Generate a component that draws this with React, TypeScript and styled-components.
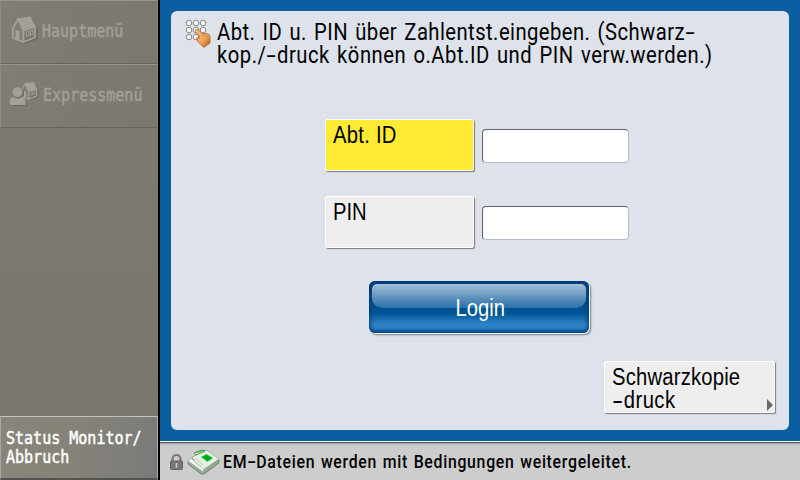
import React from "react";
import styled, { createGlobalStyle } from "styled-components";

const Global = createGlobalStyle`
  * { box-sizing: border-box; }
  body { margin: 0; overflow: hidden; font-family: Roboto, "Liberation Sans", sans-serif; }
`;

const Screen = styled.div`
  display: grid;
  grid-template-columns: 160px 640px;
  width: 800px;
  height: 480px;
  background: #0b5fa1;
`;

const Sidebar = styled.aside`
  display: flex;
  flex-direction: column;
  height: 480px;
  border-right: 2px solid #000;
  background: linear-gradient(#7f7a72, #7a756d);
`;

const MenuButton = styled.button<{ $inset: number; $gap: number }>`
  display: flex;
  align-items: center;
  gap: ${(p) => p.$gap}px;
  height: 64px;
  padding: 0 0 4px ${(p) => p.$inset}px;
  border: 1px solid;
  border-color: #99958e #8b877f #67635d #8f8b84;
  background: linear-gradient(100deg, #817d74, #7c7870);
  color: #a3a09a;
  svg { display: block; flex: none; }
`;

const StatusButton = styled.button`
  display: flex;
  flex-direction: column;
  height: 64px;
  margin-top: auto;
  padding: 11px 0 0 5px;
  border: solid;
  border-width: 1px 1px 2px 1px;
  border-color: #c5c3be #aaa8a3 #55534f #aaa8a3;
  background: linear-gradient(100deg, #89857a, #858279 50%, #7a7a79);
  color: #fff;
  text-align: left;
`;

const MonoLabel = styled.span`
  display: block;
  height: 19px;
  font: 18px/19px "DejaVu Sans Mono", monospace;
  white-space: pre;
  transform: scaleX(0.834);
  transform-origin: 0 50%;
  -webkit-text-stroke: 0.5px currentColor;
`;

const Main = styled.main`
  display: flex;
  flex-direction: column;
  height: 480px;
`;

const Panel = styled.section`
  display: flex;
  flex-direction: column;
  align-items: center;
  height: 419px;
  margin: 11px;
  border-radius: 6px;
  background: #dee2eb;
`;

const Heading = styled.header`
  display: flex;
  align-self: stretch;
  height: 108px;
  padding: 8px 0 0 14px;
  svg { flex: none; }
`;

const Lines = styled.div`
  margin: 2px 0 0 4px;
`;

const Line = styled.span<{ $ls?: number; $ws?: number; $size?: number }>`
  display: block;
  width: max-content;
  white-space: pre;
  font-size: ${(p) => p.$size ?? 23}px;
  line-height: 23px;
  letter-spacing: ${(p) => p.$ls ?? 0}px;
  word-spacing: ${(p) => p.$ws ?? 0}px;
  transform: scaleX(0.88);
  transform-origin: 0 50%;
`;

const Dash = styled.span<{ $pad?: number }>`
  display: inline-block;
  padding: 0 ${(p) => p.$pad ?? 2.6}px;
  transform: scaleX(1.65);
`;

const Form = styled.form`
  display: grid;
  grid-template-columns: 149px 147px;
  grid-auto-rows: 53px;
  column-gap: 8px;
  row-gap: 24px;
  align-items: center;
  margin-right: 6px;
`;

const KeyButton = styled.button<{ $active?: boolean }>`
  display: flex;
  align-items: flex-start;
  align-self: start;
  height: 52px;
  width: 149px;
  padding: 4px 0 0 7px;
  border: 1px solid #fff;
  border-radius: 2px;
  background: ${(p) => (p.$active ? "#ffeb33" : "#eee")};
  box-shadow: 1px 1px 1px #777a80;
  color: #000;
`;

const Field = styled.input`
  width: 147px;
  height: 34px;
  border: 1px solid;
  border-color: #5d6270 #b6bcc9 #b6bcc9 #5d6270;
  border-radius: 4px;
  background: #fff;
`;

const LoginButton = styled.button`
  position: relative;
  display: flex;
  justify-content: center;
  align-items: center;
  width: 220px;
  height: 52px;
  margin: 32px 3px 0 0;
  padding: 2px 0 0 3px;
  border: 0;
  border-radius: 6px;
  background: linear-gradient(#00427f 0, #004f90 50%, #005596 62%, #2c82c5 82%, #2c82c5 90%, #0a5b9f);
  box-shadow: inset 0 0 5px 1px #003b79, 1px 1px 0 #fff, 2px 2px 2px #777b84;
  color: #fff;
  &::before {
    content: "";
    position: absolute;
    inset: 3px 3px auto 3px;
    height: 24px;
    border-radius: 5px 5px 10px 10px;
    background: linear-gradient(#a5c0d7, #6797bf 50%, #2a70aa);
  }
  span { position: relative; transform-origin: 50% 50%; }
`;

const OptionButton = styled(KeyButton)`
  position: relative;
  align-self: flex-end;
  width: 171px;
  flex-direction: column;
  margin: 28px 14px 0 0;
  &::after {
    content: "";
    position: absolute;
    right: 1px;
    bottom: 1px;
    border-left: 6px solid #696969;
    border-top: 6px solid transparent;
    border-bottom: 6px solid transparent;
  }
`;

const Footer = styled.footer`
  display: flex;
  align-items: center;
  height: 39px;
  padding: 1px 0 0 9px;
  border-top: 1px solid #fff;
  background: linear-gradient(#55565b 0 1px, #aaa9ad 1px 2px, #c0bfc1 2px 3px, #cdcdcd 4px);
  svg { flex: none; }
  svg + svg { margin-left: 3px; }
  svg + span { margin-left: 2px; font-weight: 500; }
`;

const HouseShape = () => (
  <>
    <path d="M3 15 9 6l12-2 6 10v10l-13 5-11-5Z" fill="#6f6b64" />
    <path d="M1.800 13.500V23L12.500 27V15.500L7 4Z" fill="#827e76" stroke="#a3a09a" strokeWidth="1.800" strokeLinejoin="round" />
    <path d="M12.500 15.500 24 12v10.500L12.500 27Z" fill="#79756d" stroke="#a3a09a" strokeWidth="1.800" strokeLinejoin="round" />
    <path d="M6.500 3.500 19.500 1.500 25 12l-12 4Z" fill="#a3a09a" />
    <path d="m4.500 15 4 1v9l-4-1.500Z" fill="#a3a09a" />
    <path d="m15.500 17 2.500-.8v4.300l-2.500.8Zm4-1.200 2.500-.8v4.300l-2.500.8Z" fill="#6f6b64" stroke="#a3a09a" strokeWidth="1" />
  </>
);

const HouseIcon = () => (
  <svg width="27" height="30" viewBox="0 0 27 30"><HouseShape /></svg>
);

const UserHouseIcon = () => (
  <svg width="30" height="26" viewBox="0 0 30 26">
    <g transform="translate(11.500 0) scale(.67)"><HouseShape /></g>
    <circle cx="9.500" cy="12.500" r="5.600" fill="#6f6b64" />
    <path d="M2 25v-5q0-3 4-3h8q4 0 4 3v5Z" fill="#6f6b64" />
    <circle cx="8.500" cy="11.300" r="5" fill="#a3a09a" />
    <path d="M1 24v-4q0-4 4-4 4 3 7 0 4.500 0 4.500 4v4Z" fill="#a3a09a" />
  </svg>
);

const KeypadIcon = () => (
  <svg width="28" height="32" viewBox="0 0 28 32">
    <defs>
      <linearGradient id="hand" x1="0" y1="0" x2="1" y2="1">
        <stop stopColor="#ffc477" /><stop offset=".6" stopColor="#eda254" /><stop offset="1" stopColor="#98551f" />
      </linearGradient>
    </defs>
    {[4, 11, 18].map((y) => [4, 11, 18].map((x) => (
      <circle key={`${x}-${y}`} cx={x} cy={y} r="2.800" fill="#f8f8f8" stroke="#878787" strokeWidth="1" />
    )))}
    <path d="M10.500 12.500q-.5-2.500 2-2l5.500 4.500q2-1.300 4-.3 2.500 0 3 3V24l-6 4.500-6.500-6-1-3.500q.8-1 3 .3l-.5-2.300Z" fill="url(#hand)" stroke="#b5692a" strokeWidth=".8" />
    <path d="m17.500 15.500 2 2.500m1-3 1.500 3" stroke="#bd7434" strokeWidth=".8" fill="none" />
  </svg>
);

const LockIcon = () => (
  <svg width="15" height="18" viewBox="0 0 15 18">
    <path d="M3.500 8V6a4 4 0 0 1 8 0v2" fill="none" stroke="#777" strokeWidth="2.200" />
    <rect x="1.500" y="8" width="12" height="8.500" rx="1" fill="#777" stroke="#646464" />
    <path d="M7.500 10v4.500" stroke="#d0d0d0" strokeWidth="1.600" />
  </svg>
);

const ScannerIcon = () => (
  <svg width="34" height="28" viewBox="0 0 34 28">
    <path d="m1 13 4-3 11 10 13-11 3 3v3L17 26h-3L1 16Z" fill="#93a793" stroke="#5f7f60" strokeWidth=".8" />
    <path d="M5 9 20 2l12 9-16 11-4-1Z" fill="#e5efe3" stroke="#8ca48c" strokeWidth=".8" />
    <path d="m1 13 3-3 12 11 .5 3Z" fill="#f4faf2" stroke="#9bb39b" strokeWidth=".6" />
    <path d="m7 5 8-3 3 1-9 4Z" fill="#e9f2e7" stroke="#52964e" />
    <path d="m9 4 6-2 1 1-6 2Z" fill="#43ab3b" />
    <path d="m14.500 9 5-2.500 6 3.500-5 3.500Z" fill="#05a51a" stroke="#0bd02a" strokeWidth=".7" />
    <path d="m8 10 8 7m-10-5 8 7" stroke="#a4b9a2" strokeWidth=".7" />
  </svg>
);

export default function App() {
  return (
    <>
      <Global />
      <Screen>
        <Sidebar>
          <MenuButton $inset={10} $gap={4}><HouseIcon /><MonoLabel>Hauptmenü</MonoLabel></MenuButton>
          <MenuButton $inset={8} $gap={4}><UserHouseIcon /><MonoLabel>Expressmenü</MonoLabel></MenuButton>
          <StatusButton>
            <MonoLabel>Status Monitor/</MonoLabel>
            <MonoLabel>Abbruch</MonoLabel>
          </StatusButton>
        </Sidebar>
        <Main>
          <Panel>
            <Heading>
              <KeypadIcon />
              <Lines>
                <Line $ls={0.5} $ws={2}>Abt. ID u. PIN über Zahlentst.eingeben. (Schwarz<Dash>-</Dash></Line>
                <Line $ls={0.57} $ws={2}>kop./<Dash>-</Dash>druck können o.Abt.ID und PIN verw.werden.)</Line>
              </Lines>
            </Heading>
            <Form onSubmit={(e) => e.preventDefault()}>
              <KeyButton type="button" $active><Line $ls={0.3}>Abt. ID</Line></KeyButton>
              <Field aria-label="Abt. ID" />
              <KeyButton type="button"><Line>PIN</Line></KeyButton>
              <Field aria-label="PIN" type="password" />
            </Form>
            <LoginButton><Line>Login</Line></LoginButton>
            <OptionButton>
              <Line $ls={0.22}>Schwarzkopie</Line>
              <Line $ls={0.5}><Dash>-</Dash>druck</Line>
            </OptionButton>
          </Panel>
          <Footer>
            <LockIcon />
            <ScannerIcon />
            <Line $size={18} $ls={0.8} $ws={1.2}>EM<Dash $pad={1.7}>-</Dash>Dateien werden mit Bedingungen weitergeleitet.</Line>
          </Footer>
        </Main>
      </Screen>
    </>
  );
}
